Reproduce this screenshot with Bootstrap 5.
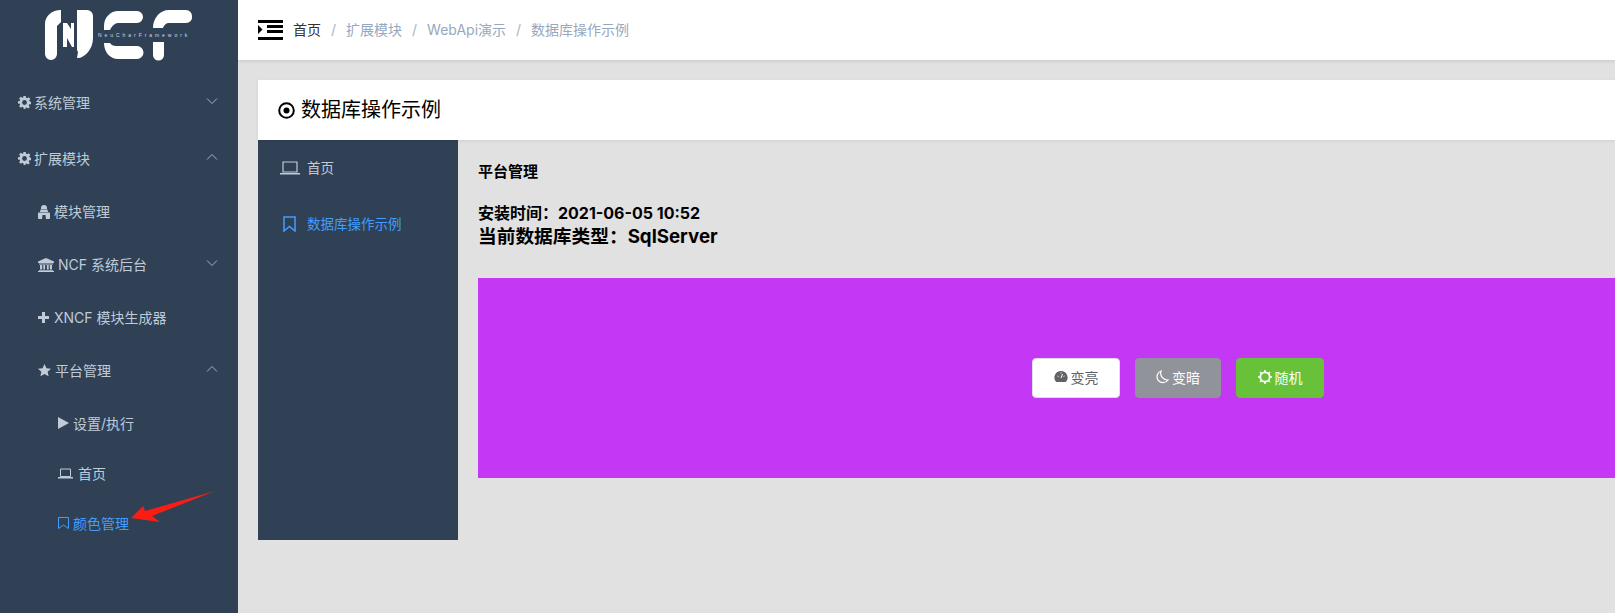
<!DOCTYPE html>
<html lang="zh-CN">
<head>
  <meta charset="UTF-8">
  <title>数据库操作示例</title>
  <link href="https://cdn.jsdelivr.net/npm/bootstrap@5.3.0/dist/css/bootstrap.min.css" rel="stylesheet">
  <style>
    html, body { height: 613px; overflow: hidden; }
    body { font-family: "Inter", "Noto Sans CJK SC", sans-serif; background: #e1e1e1; color: #000; font-size: 14px; }
    .side-bar { width: 238px; height: 613px; background: #304156; color: #bfcbd9; flex: none; position: relative; }
    .logo-box { height: 77px; padding: 10px 0 0 44px; }
    .logo-tag { font-size: 5px; letter-spacing: 2.95px; fill: #d5dbe3; font-family: "Liberation Sans", sans-serif; }
    .menu-row { height: 53px; color: #bfcbd9; font-size: 14px; position: relative; padding-bottom: 2px; }
    .menu-row svg.ico { flex: none; margin-right: 3px; }
    .lv1 { padding-left: 18px; }
    .lv1-gap { margin-bottom: 3px; }
    .lv2 { padding-left: 38px; }
    .lv3 { padding-left: 58px; height: 50px; padding-bottom: 0; }
    .menu-on { color: #409eff; }
    .chev { position: absolute; right: 20px; top: 50%; margin-top: -7px; }
    .side-arrow { position: absolute; left: 125px; top: 485px; }
    .top-bar { height: 60px; background: #fff; box-shadow: 0 1px 4px rgba(0,0,0,.12); padding-left: 20px; }
    .crumbs { margin: 0 0 2px 10px; font-size: 14px; --bs-breadcrumb-item-padding-x: 10px; }
    .crumbs .breadcrumb-item { color: #97a8be; }
    .crumbs .breadcrumb-item::before { color: #a9b4c6; }
    .crumbs .crumb-home { color: #303133; }
    .page-wrap { padding: 20px 0 0 20px; }
    .title-bar { height: 60px; background: #fff; padding-left: 20px; font-size: 20px; box-shadow: 0 1px 3px rgba(0,0,0,.08); position: relative; gap: 6px; }
    .sub-side { width: 200px; height: 400px; background: #304156; flex: none; }
    .sub-row { height: 56px; padding-left: 22px; color: #bfcbd9; font-size: 13.5px; }
    .sub-row svg { margin-right: 7px; flex: none; }
    .sub-on { color: #409eff; }
    .main-pane { padding: 21px 0 0 20px; }
    .pane-title { font-size: 15px; font-weight: 700; line-height: 22px; margin-bottom: 19px; }
    .pane-time { font-size: 16px; font-weight: 700; line-height: 22px; }
    .pane-db { font-size: 18.72px; font-weight: 700; line-height: 26px; }
    .color-box { height: 200px; background: #c437f5; margin-top: 28px; padding-left: 554px; gap: 15px; }
    .act-btn { height: 40px; width: 88px; padding: 0 0 2px; font-size: 14px; border-radius: 4px; gap: 3px; }
    .act-light { background: #fff; color: #606266; border: 1px solid #dcdfe6; }
    .act-dark { background: #909399; color: #fff; border: 1px solid #909399; width: 86px; }
    .act-rand { background: #67c23a; color: #fff; border: 1px solid #67c23a; }
  </style>
</head>
<body>
  <div class="d-flex">
    <aside class="side-bar">
      <div class="logo-box">
        <svg width="150" height="52" viewBox="0 0 150 52">
          <g fill="#fff">
            <path d="M17 0v12l-4 4v28a6 6 0 0 1-12 0V14C1 6 8 0 17 0z"/>
            <path d="M19 13h4l4 6v-6h3v24h-2l-5-9v9h-4z"/>
            <path d="M33 0h10a6 6 0 0 1 6 6v22c0 12-9 20-15 20h-1l1-6-1-2z"/>
            <path d="M99 7a6 6 0 0 1-6 6H74c-3 0-6 3-8 7h-6v-4C60 7 67 1 74 1h19a6 6 0 0 1 6 6z"/>
            <path d="M60 33h6c2 3 5 3 8 3h19a6.500 6.500 0 0 1 0 13H74C66 49 60 42 60 33z"/>
            <path d="M148 6a6 6 0 0 1-6 7h-17c-3 0-5 2-6 5h-10C109 8 116 0 125 0h17a6 6 0 0 1 6 6z"/>
            <path d="M109 32h11v13a5.500 5.500 0 0 1-11 0z"/>
          </g>
          <text class="logo-tag" x="54" y="27">NeuCharFramework</text>
        </svg>
      </div>
      <nav class="nav flex-column">
        <a class="menu-row lv1 lv1-gap d-flex align-items-center text-decoration-none">
          <svg class="ico" width="13" height="13" viewBox="0 0 16 16"><path fill="#bfcbd9" fill-rule="evenodd" d="M6.500 0h3l.4 2.200 1.300.6L13.100 1.500l2 2-1.300 1.900.6 1.300L16 7v3l-2.200.3-.6 1.300 1.300 1.900-2 2-1.900-1.300-1.300.6L9 16H7l-.4-2.200-1.300-.6-1.900 1.300-2-2 1.300-1.900-.6-1.300L0 9.500v-3l2.100-.4.6-1.300L1.400 3l2-2 1.900 1.300 1.300-.6zM8 5a3 3 0 1 0 0 6 3 3 0 0 0 0-6z"/></svg>
          系统管理
          <svg class="chev" width="12" height="8" viewBox="0 0 12 8"><path d="M1 1.500l5 5 5-5" fill="none" stroke="#a5b4c6" stroke-width="1"/></svg>
        </a>
        <a class="menu-row lv1 d-flex align-items-center text-decoration-none">
          <svg class="ico" width="13" height="13" viewBox="0 0 16 16"><path fill="#bfcbd9" fill-rule="evenodd" d="M6.500 0h3l.4 2.200 1.300.6L13.100 1.500l2 2-1.300 1.900.6 1.300L16 7v3l-2.200.3-.6 1.300 1.300 1.900-2 2-1.900-1.300-1.300.6L9 16H7l-.4-2.200-1.300-.6-1.900 1.300-2-2 1.300-1.900-.6-1.300L0 9.500v-3l2.100-.4.6-1.300L1.400 3l2-2 1.900 1.300 1.300-.6zM8 5a3 3 0 1 0 0 6 3 3 0 0 0 0-6z"/></svg>
          扩展模块
          <svg class="chev" width="12" height="8" viewBox="0 0 12 8"><path d="M1 6.500l5-5 5 5" fill="none" stroke="#a5b4c6" stroke-width="1"/></svg>
        </a>
        <a class="menu-row lv2 d-flex align-items-center text-decoration-none">
          <svg class="ico" width="12" height="14" viewBox="0 0 12 14" style="margin-right:4px"><path fill="#bfcbd9" d="M6 0c2 0 3 1 3 3v1H3V3c0-2 1-3 3-3zM2.500 4.500h7L10 7H2zM1 7.500h10c.5 0 1 .5 1 1V13c0 .5-.5 1-1 1H8L7.500 10h-3L4 14H1c-.5 0-1-.5-1-1V8.500c0-.5.5-1 1-1z"/></svg>
          模块管理
        </a>
        <a class="menu-row lv2 d-flex align-items-center text-decoration-none">
          <svg class="ico" width="16" height="14" viewBox="0 0 16 14" style="margin-right:4px"><path fill="#bfcbd9" d="M8 0l8 3.500V5H0V3.500zM1 5.500h14V6.500H1zM2 7h2.200v4.500H2zM5.300 7h1.800v4.500H5.300zM8.900 7h1.800v4.500H8.900zM11.800 7H14v4.500h-2.200zM1 12h14v.8H1zM0 13h16v1H0z"/></svg>
          NCF 系统后台
          <svg class="chev" width="12" height="8" viewBox="0 0 12 8"><path d="M1 1.500l5 5 5-5" fill="none" stroke="#a5b4c6" stroke-width="1"/></svg>
        </a>
        <a class="menu-row lv2 d-flex align-items-center text-decoration-none">
          <svg class="ico" width="11" height="11" viewBox="0 0 11 11" style="margin-right:5px"><path fill="#bfcbd9" d="M4 0h3v4h4v3H7v4H4V7H0V4h4z"/></svg>
          XNCF 模块生成器
        </a>
        <a class="menu-row lv2 d-flex align-items-center text-decoration-none">
          <svg class="ico" width="13" height="13" viewBox="0 0 14 14" style="margin-right:4px"><path fill="#bfcbd9" d="M7 0l2.100 4.500 4.900.6-3.600 3.300 1 4.900L7 10.800 2.600 13.300l1-4.900L0 5.100l4.900-.6z"/></svg>
          平台管理
          <svg class="chev" width="12" height="8" viewBox="0 0 12 8"><path d="M1 6.500l5-5 5 5" fill="none" stroke="#a5b4c6" stroke-width="1"/></svg>
        </a>
        <a class="menu-row lv3 d-flex align-items-center text-decoration-none">
          <svg class="ico" width="11" height="12" viewBox="0 0 11 12" style="margin-right:4px"><path fill="#bfcbd9" d="M0 0l11 6-11 6z"/></svg>
          设置/执行
        </a>
        <a class="menu-row lv3 d-flex align-items-center text-decoration-none">
          <svg class="ico" width="15" height="11" viewBox="0 0 15 11" style="margin-right:5px"><path fill="none" stroke="#bfcbd9" d="M2.500 1h10v7.500h-10z"/><path fill="#bfcbd9" d="M0 9h15v1.500H0z"/></svg>
          首页
        </a>
        <a class="menu-row lv3 menu-on d-flex align-items-center text-decoration-none">
          <svg class="ico" width="11" height="12" viewBox="0 0 11 12" style="margin-right:4px"><path fill="none" stroke="#409eff" d="M.5.500h10v11L5.500 8l-5 3.500z"/></svg>
          颜色管理
        </a>
      </nav>
      <svg class="side-arrow" width="95" height="45" viewBox="0 0 95 45"><path fill="#fb1d14" d="M6 33L18 21l2 5L90 6 27 31l8 6z"/></svg>
    </aside>
    <div class="flex-grow-1" style="min-width:0">
      <header class="top-bar d-flex align-items-center">
        <svg width="25" height="20" viewBox="0 0 25 20"><path fill="#000" d="M0 0h25v3H0zM9 5h16v3H9zM9 10h16v3H9zM0 17h25v3H0zM0 5l4.500 4.500L0 14z"/></svg>
        <ol class="breadcrumb crumbs">
          <li class="breadcrumb-item crumb-home">首页</li>
          <li class="breadcrumb-item">扩展模块</li>
          <li class="breadcrumb-item">WebApi演示</li>
          <li class="breadcrumb-item">数据库操作示例</li>
        </ol>
      </header>
      <div class="page-wrap">
        <div class="title-bar d-flex align-items-center">
          <svg width="17" height="17" viewBox="0 0 17 17"><circle cx="8.500" cy="8.500" r="7.300" fill="none" stroke="#000" stroke-width="2"/><circle cx="8.500" cy="8.500" r="3" fill="#000"/></svg>
          数据库操作示例
        </div>
        <div class="d-flex">
          <div class="sub-side">
            <div class="sub-row d-flex align-items-center">
              <svg width="20" height="14" viewBox="0 0 20 14"><path fill="none" stroke="#bfcbd9" stroke-width="1.200" d="M3 1h14v10H3z"/><path fill="#bfcbd9" d="M0 12h20v1.500H0z"/></svg>
              首页
            </div>
            <div class="sub-row sub-on d-flex align-items-center">
              <svg width="13" height="16" viewBox="0 0 13 16" style="margin:0 11px 0 3px"><path fill="none" stroke="#409eff" stroke-width="1.500" d="M1 1h11v14l-5.500-4.500L1 15z"/></svg>
              数据库操作示例
            </div>
          </div>
          <div class="main-pane flex-grow-1">
            <div class="pane-title">平台管理</div>
            <div class="pane-time">安装时间：2021-06-05 10:52</div>
            <div class="pane-db">当前数据库类型：SqlServer</div>
            <div class="color-box d-flex align-items-center">
              <button type="button" class="btn act-btn act-light d-flex align-items-center justify-content-center">
                <svg width="14" height="12" viewBox="0 0 13 12"><path fill="#606266" d="M6.500 0a6.500 6.500 0 0 1 5 10.700c-.3.300-.6.300-1 .3h-8c-.4 0-.7 0-1-.3A6.500 6.500 0 0 1 6.500 0z"/><path stroke="#fff" stroke-width="1" d="M6.500 7L8 3M3 5l1 .7M6.500 1.500v1M10 5l-1 .7"/></svg>
                变亮
              </button>
              <button type="button" class="btn act-btn act-dark d-flex align-items-center justify-content-center">
                <svg width="13" height="14" viewBox="0 0 13 14"><path fill="none" stroke="#fff" stroke-width="1.200" d="M5 1a6 6 0 1 0 7 9A7 7 0 0 1 5 1z"/></svg>
                变暗
              </button>
              <button type="button" class="btn act-btn act-rand d-flex align-items-center justify-content-center">
                <svg width="14" height="14" viewBox="0 0 14 14"><circle cx="7" cy="7" r="4.700" fill="none" stroke="#fff" stroke-width="1.800"/><path stroke="#fff" stroke-width="1.500" d="M7 0v2M7 12v2M0 7h2M12 7h2M2 2l1.500 1.500M10.500 10.500L12 12M2 12l1.500-1.500M10.500 3.500L12 2"/></svg>
                随机
              </button>
            </div>
          </div>
        </div>
      </div>
    </div>
  </div>
  <script src="https://cdn.jsdelivr.net/npm/bootstrap@5.3.0/dist/js/bootstrap.bundle.min.js"></script>
</body>
</html>
